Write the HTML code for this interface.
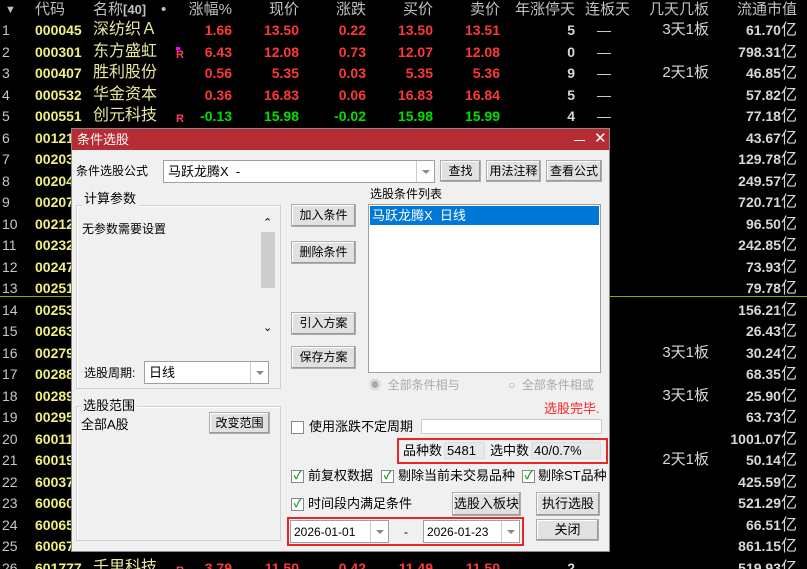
<!DOCTYPE html>
<html style="width:807px;height:569px;overflow:hidden"><head><meta charset="utf-8"><style>
*{margin:0;padding:0;box-sizing:border-box}
body{width:807px;height:569px;background:#000;overflow:hidden;position:relative;font-family:"Liberation Sans","Noto Sans CJK SC",sans-serif}
.a{position:absolute;white-space:nowrap}
.h{color:#c0c0c0;font-size:15px;top:0;line-height:20px}
.n{font-size:14px;font-weight:bold;line-height:20px}
.r{color:#ff3838}.g{color:#00e000}.w{color:#d8d8d8}.y{color:#f0f080}.yn{color:#e8e8a0;font-size:16px;line-height:20px}
.idx{color:#c8c8c8;font-size:14px;line-height:20px;left:2px}
#dlg{position:absolute;left:71px;top:128px;width:539px;height:424px;background:#f0f0f0;border:1px solid #888}
#dlg .a{font-size:12px;color:#000;line-height:16px}
.tb{position:absolute;left:0;top:0;width:537px;height:21px;background:#b52c34}
.btn{position:absolute;background:#e1e1e1;border:1px solid #adadad;box-shadow:inset -1px -1px 0 #999,inset 1px 1px 0 #fff;font-size:12px;text-align:center;color:#000}
.box{position:absolute;background:#fff;border:1px solid #a0a0a0}
.grp{position:absolute;border:1px solid #d0d0d0;box-shadow:1px 1px 0 #fff inset}
.cb{position:absolute;width:13px;height:13px;background:#fff;border:1px solid #888;font-size:11px;line-height:11px;color:#1a9a1a;text-align:center;font-weight:bold}
.dd{position:absolute;top:0;right:0;width:18px;height:100%;border-left:1px solid #ccc}
.dd:after{content:"";position:absolute;left:5px;top:45%;border:4px solid transparent;border-top:4px solid #888}
</style></head><body>
<div class="a h" style="left:5px;font-size:11px">▼</div>
<div class="a h" style="left:35px">代码</div>
<div class="a h" style="left:93px">名称<span style="font-size:13px;font-weight:bold">[40]</span></div>
<div class="a h" style="left:161px">•</div>
<div class="a h" style="right:575px">涨幅%</div>
<div class="a h" style="right:508px">现价</div>
<div class="a h" style="right:441px">涨跌</div>
<div class="a h" style="right:374px">买价</div>
<div class="a h" style="right:307px">卖价</div>
<div class="a h" style="right:232px">年涨停天</div>
<div class="a h" style="left:585px">连板天</div>
<div class="a h" style="right:98px">几天几板</div>
<div class="a h" style="right:10px">流通市值</div>

<div id="rows"></div>
<div class="a" style="left:0;top:296px;width:807px;height:1px;background:#a0a000"></div>
<script>
var D=[
["000045","深纺织Ａ","","r","1.66","13.50","0.22","13.50","13.51","5","3天1板","61.70"],
["000301","东方盛虹","R","r","6.43","12.08","0.73","12.07","12.08","0","","798.31"],
["000407","胜利股份","","r","0.56","5.35","0.03","5.35","5.36","9","2天1板","46.85"],
["000532","华金资本","","r","0.36","16.83","0.06","16.83","16.84","5","","57.82"],
["000551","创元科技","R","g","-0.13","15.98","-0.02","15.98","15.99","4","","77.18"]];
var codes=["00121","00203","00204","00207","00212","00232","00247","00251","00253","00263","00279","00288","00289","00295","60011","60019","60037","60060","60065","60067"];
var mv=["43.67","129.78","249.57","720.71","96.50","242.85","73.93","79.78","156.21","26.43","30.24","68.35","25.90","63.73","1001.07","50.14","425.59","521.29","66.51","861.15"];
var jb={16:"3天1板",18:"3天1板",21:"2天1板"};
var h="";
function row(i){return 20+(i-1)*21.5;}
for(var i=1;i<=26;i++){var t=row(i);
h+='<div class="a idx" style="top:'+t+'px">'+i+'</div>';
var d=null,c,m,j="";
if(i<=5){d=D[i-1];c=d[0];m=d[11];j=d[10];}
else if(i<26){c=codes[i-6]+"0";m=mv[i-6];j=jb[i]||"";}
else{d=["601777","千里科技","R","r","3.79","11.50","0.42","11.49","11.50","2","","519.93"];c=d[0];m=d[11];}
h+='<div class="a n y" style="left:35px;top:'+t+'px">'+c+'</div>';
if(d){
h+='<div class="a yn" style="left:93px;top:'+t+'px">'+d[1]+'</div>';
if(d[2])h+='<div class="a n" style="left:176px;top:'+(t+3)+'px;color:#ff4060;font-size:11px">R</div>';
if(i==2)h+='<div class="a" style="left:176px;top:'+(t+5)+'px;width:4px;height:3px;background:#f0f"></div>';
var cl=d[3],xs=[575,508,441,374,307];
for(var k=0;k<5;k++)h+='<div class="a n '+cl+'" style="right:'+xs[k]+'px;top:'+t+'px">'+d[4+k]+'</div>';
h+='<div class="a n w" style="right:232px;top:'+t+'px">'+d[9]+'</div>';
h+='<div class="a w" style="left:597px;top:'+t+'px;font-size:14px;line-height:20px">—</div>';
}
if(j)h+='<div class="a w" style="right:98px;top:'+t+'px;font-size:15px;line-height:20px">'+j+'</div>';
h+='<div class="a w" style="right:10px;top:'+t+'px;line-height:20px"><b style="font-size:14px">'+m+'</b><span style="font-size:16px">亿</span></div>';
}
document.getElementById("rows").innerHTML=h;
</script>

<div id="dlg">
<div class="tb"></div>
<div class="a" style="left:5px;top:2px;font-size:13px;line-height:17px"><span style="color:#fff">条件选股</span></div>
<div class="a" style="left:502px;top:11px;width:11px;height:1px;background:#fff"></div>
<div class="a" style="left:522px;top:1px;font-size:15px;line-height:18px"><span style="color:#fff">✕</span></div>

<div class="a" style="left:4px;top:34px">条件选股公式</div>
<div class="box" style="left:91px;top:31px;width:272px;height:23px"><div class="a" style="left:4px;top:3px;font-size:13px">马跃龙腾X&nbsp; -</div><div class="dd"></div></div>
<div class="btn" style="left:368px;top:31px;width:41px;height:22px;line-height:20px">查找</div>
<div class="btn" style="left:414px;top:31px;width:55px;height:22px;line-height:20px">用法注释</div>
<div class="btn" style="left:474px;top:31px;width:56px;height:22px;line-height:20px">查看公式</div>

<div class="grp" style="left:4px;top:76px;width:205px;height:184px"></div>
<div class="a" style="left:10px;top:62px;background:#f0f0f0;padding:0 2px;font-size:13px">计算参数</div>
<div class="a" style="left:10px;top:92px;font-size:12px">无参数需要设置</div>
<div class="a" style="left:188px;top:86px;width:16px;height:121px;background:#f0f0f0"></div>
<div class="a" style="left:189px;top:103px;width:14px;height:56px;background:#cdcdcd"></div>
<div class="a" style="left:191px;top:86px;font-size:11px">⌃</div>
<div class="a" style="left:191px;top:191px;font-size:11px">⌄</div>
<div class="a" style="left:12px;top:236px">选股周期:</div>
<div class="box" style="left:72px;top:232px;width:125px;height:23px"><div class="a" style="left:4px;top:3px;font-size:13px">日线</div><div class="dd"></div></div>

<div class="grp" style="left:4px;top:277px;width:205px;height:135px"></div>
<div class="a" style="left:9px;top:269px;background:#f0f0f0;padding:0 2px;font-size:13px">选股范围</div>
<div class="a" style="left:9px;top:288px;font-size:13px">全部A股</div>
<div class="btn" style="left:137px;top:283px;width:61px;height:22px;line-height:20px">改变范围</div>

<div class="btn" style="left:219px;top:75px;width:65px;height:23px;line-height:21px">加入条件</div>
<div class="btn" style="left:219px;top:112px;width:65px;height:23px;line-height:21px">删除条件</div>
<div class="btn" style="left:219px;top:183px;width:65px;height:23px;line-height:21px">引入方案</div>
<div class="btn" style="left:219px;top:217px;width:65px;height:23px;line-height:21px">保存方案</div>

<div class="a" style="left:298px;top:57px">选股条件列表</div>
<div class="box" style="left:296px;top:75px;width:233px;height:169px"><div class="a" style="left:1px;top:1px;width:229px;height:19px;background:#0078d7"></div><div class="a" style="left:3px;top:3px;font-size:13px"><span style="color:#fff">马跃龙腾X&nbsp; 日线</span></div></div>

<div class="a" style="left:297px;top:248px"><span style="color:#aaa">◉&nbsp; 全部条件相与</span></div>
<div class="a" style="left:436px;top:248px"><span style="color:#aaa">○&nbsp; 全部条件相或</span></div>
<div class="a" style="left:472px;top:272px;font-size:13px"><span style="color:#ff2020">选股完毕.</span></div>

<div class="cb" style="left:219px;top:292px"></div>
<div class="a" style="left:237px;top:290px;font-size:13px">使用涨跌不定周期</div>
<div class="box" style="left:349px;top:290px;width:181px;height:15px;border-color:#ccc"></div>

<div class="a" style="left:325px;top:309px;width:211px;height:26px;border:2px solid #e8262a"></div>
<div class="a" style="left:331px;top:314px;font-size:13px">品种数</div>
<div class="a" style="left:372px;top:313px;width:41px;height:17px;background:#e8e8e8;border:1px solid #ddd;font-size:13px;padding-left:2px">5481</div>
<div class="a" style="left:418px;top:314px;font-size:13px">选中数</div>
<div class="a" style="left:459px;top:313px;width:70px;height:17px;background:#e8e8e8;border:1px solid #ddd;font-size:13px;padding-left:2px">40/0.7%</div>

<div class="cb" style="left:219px;top:341px">✓</div>
<div class="a" style="left:236px;top:339px;font-size:13px">前复权数据</div>
<div class="cb" style="left:309px;top:341px">✓</div>
<div class="a" style="left:326px;top:339px;font-size:13px">剔除当前未交易品种</div>
<div class="cb" style="left:450px;top:341px">✓</div>
<div class="a" style="left:466px;top:339px;font-size:13px">剔除ST品种</div>

<div class="cb" style="left:219px;top:369px">✓</div>
<div class="a" style="left:236px;top:367px;font-size:13px">时间段内满足条件</div>
<div class="btn" style="left:380px;top:363px;width:69px;height:24px;line-height:22px;font-size:13px">选股入板块</div>
<div class="btn" style="left:464px;top:363px;width:64px;height:24px;line-height:22px;font-size:13px">执行选股</div>

<div class="a" style="left:215px;top:388px;width:237px;height:29px;border:2px solid #e8262a"></div>
<div class="box" style="left:218px;top:391px;width:99px;height:23px"><div class="a" style="left:3px;top:3px">2026-01-01</div><div class="dd"></div></div>
<div class="a" style="left:332px;top:395px">-</div>
<div class="box" style="left:351px;top:391px;width:97px;height:23px"><div class="a" style="left:3px;top:3px">2026-01-23</div><div class="dd"></div></div>
<div class="btn" style="left:464px;top:390px;width:63px;height:22px;line-height:20px;font-size:13px">关闭</div>
</div>
</body></html>
